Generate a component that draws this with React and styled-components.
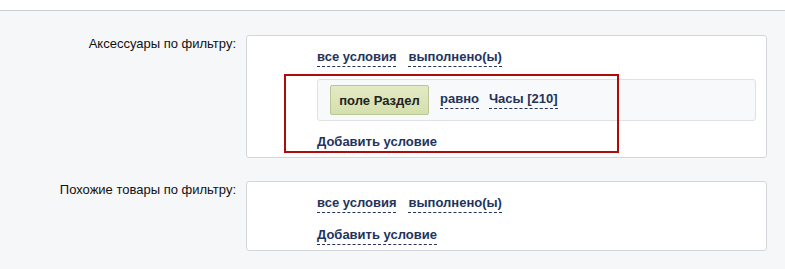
import React from "react";
import styled, { createGlobalStyle } from "styled-components";

const GlobalStyle = createGlobalStyle`
  html, body {
    margin: 0;
    padding: 0;
    background: #f5f7f9;
    font-family: "Liberation Sans", Arial, sans-serif;
  }
`;

const TopBar = styled.div`
  height: 10px;
  background: #ffffff;
  border-bottom: 1px solid #c9ced3;
`;

const Page = styled.div`
  padding-top: 24px;
  display: flex;
  flex-direction: column;
  gap: 23px;
`;

const Row = styled.div`
  display: grid;
  grid-template-columns: 246px 521px;
`;

const Label = styled.div`
  font-size: 13px;
  line-height: 16px;
  color: #111;
  text-align: right;
  padding-right: 10px;
  padding-top: 1px;
`;

const Box = styled.div`
  position: relative;
  box-sizing: border-box;
  background: #fff;
  border: 1px solid #d3d7dc;
  border-radius: 3px;
  padding: 13px 10px ${(p) => p.$bottom}px 70px;
`;

const LinkLine = styled.div`
  display: flex;
  align-items: center;
  gap: ${(p) => p.$gap || 12}px;
`;

const Dashed = styled.span`
  font-size: 13px;
  font-weight: bold;
  line-height: 16px;
  color: #23335c;
  border-bottom: 1px dashed #23335c;
  padding-bottom: 1px;
  cursor: pointer;
`;

const AddLink = styled(Dashed)`
  display: inline-block;
  margin-top: ${(p) => p.$top}px;
`;

const Condition = styled.div`
  margin: 12px 0 0 0;
  box-sizing: border-box;
  height: 42px;
  background: #f8f9fa;
  border: 1px solid #dfe2e5;
  border-radius: 3px;
  padding: 4px 12px;
  display: flex;
  align-items: center;
  gap: 11px;
`;

const FieldButton = styled.button`
  box-sizing: border-box;
  height: 30px;
  width: 99px;
  padding: 0;
  font-family: inherit;
  font-size: 13px;
  font-weight: bold;
  color: #222;
  background: linear-gradient(#e4eac4, #d5dfad);
  border: 1px solid #bcc596;
  border-radius: 2px;
`;

const Highlight = styled.div`
  position: absolute;
  left: 37px;
  top: 38px;
  width: 335px;
  height: 79px;
  box-sizing: border-box;
  border: 2px solid #b00a0a;
  pointer-events: none;
`;

const Links = () => (
  <LinkLine>
    <Dashed>все условия</Dashed>
    <Dashed>выполнено(ы)</Dashed>
  </LinkLine>
);

export default function App() {
  return (
    <>
      <GlobalStyle />
      <TopBar />
      <Page>
        <Row>
          <Label>Аксессуары по фильтру:</Label>
          <Box $bottom={5}>
            <Links />
            <Condition>
              <FieldButton>поле Раздел</FieldButton>
              <LinkLine $gap={10}>
                <Dashed>равно</Dashed>
                <Dashed>Часы [210]</Dashed>
              </LinkLine>
            </Condition>
            <AddLink $top={13}>Добавить условие</AddLink>
            <Highlight />
          </Box>
        </Row>
        <Row>
          <Label>Похожие товары по фильтру:</Label>
          <Box $bottom={5}>
            <Links />
            <AddLink $top={14}>Добавить условие</AddLink>
          </Box>
        </Row>
      </Page>
    </>
  );
}
